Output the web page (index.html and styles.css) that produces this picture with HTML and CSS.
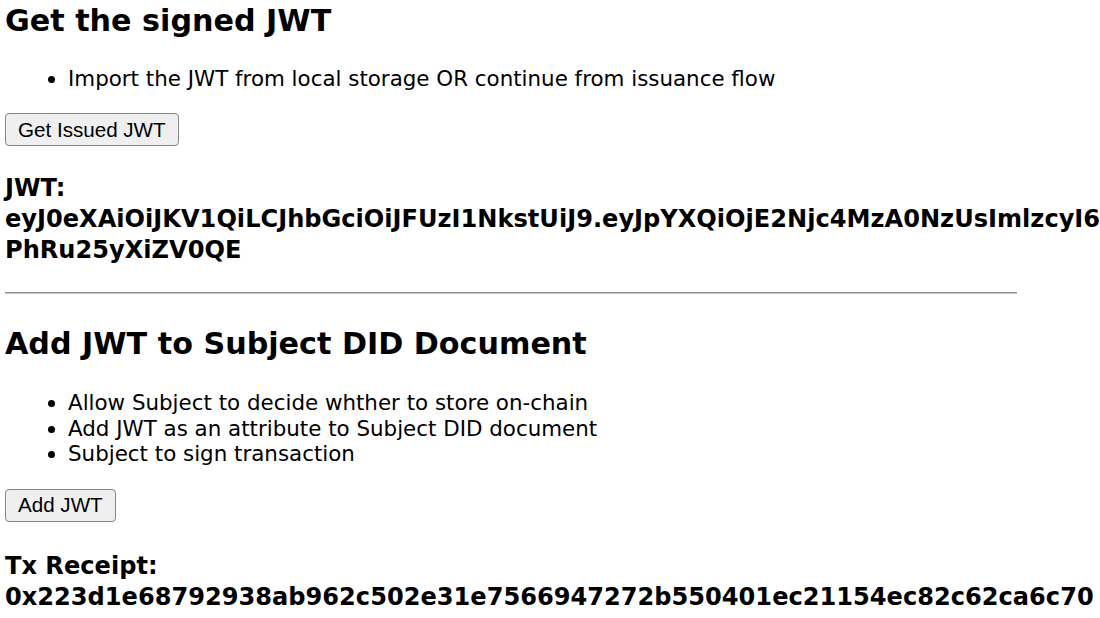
FILE: index.html
```html
<!DOCTYPE html>
<html lang="en">
<head>
<meta charset="utf-8">
<title>JWT</title>
<link rel="stylesheet" href="styles.css">
</head>
<body>
<main class="page">
  <section class="step">
    <h2 class="step-title">Get the signed JWT</h2>
    <ul class="notes">
      <li>Import the JWT from local storage OR continue from issuance flow</li>
    </ul>
    <button class="action" type="button">Get Issued JWT</button>
    <h3 class="result"><span class="result-label">JWT:</span><span class="result-value">eyJ0eXAiOiJKV1QiLCJhbGciOiJFUzI1NkstUiJ9.eyJpYXQiOjE2Njc4MzA0NzUsImlzcyI6ImRpZDpldGhyOnJpbmtlYnk6MHgzZjE0YjJhNjc4ZDlkMmE0YzE2ZTgxMDI2NzE3NDg5ZjU1ZjcxYzRmIn0.Qm5rVDNFdUh0cU9sZ1R4aGpYbW9YcUZ4d2l0dFZ5Z0lhR3ZzYUJ3c2Fx-PhRu25yXiZV0QE</span></h3>
  </section>
  <hr class="divider">
  <section class="step step--after-divider">
    <h2 class="step-title">Add JWT to Subject DID Document</h2>
    <ul class="notes">
      <li>Allow Subject to decide whther to store on-chain</li>
      <li>Add JWT as an attribute to Subject DID document</li>
      <li>Subject to sign transaction</li>
    </ul>
    <button class="action" type="button">Add JWT</button>
    <h3 class="result"><span class="result-label">Tx Receipt:</span><span class="result-value">0x223d1e68792938ab962c502e31e7566947272b550401ec21154ec82c62ca6c70</span></h3>
  </section>
</main>
</body>
</html>
```
FILE: styles.css
```css
html {
  overflow: hidden;
  background: #fff;
}

body {
  margin: 0;
  font-family: "DejaVu Sans", Verdana, sans-serif;
  color: #000;
}

.page {
  width: 1012px;
  padding: 3px 0 0 5px;
}

.step-title {
  margin: 0;
  font-size: 30.2px;
  line-height: 36px;
  font-weight: bold;
}

.notes {
  margin: 26.6px 0 0;
  padding-left: 63px;
  font-size: 21.4px;
  line-height: 25.7px;
}

.action {
  display: block;
  margin: 22px 0 0;
  height: 33px;
  padding: 0 12px;
  font-family: "Liberation Sans", Arial, sans-serif;
  font-size: 20.6px;
  color: #000;
  background: #efefef;
  border: 1px solid #858585;
  border-radius: 4px;
}

.result {
  margin: 27px 0 0;
  font-size: 24.1px;
  line-height: 31px;
  font-weight: bold;
}

.result-label,
.result-value {
  display: block;
}

.divider {
  margin: 26px 0 0;
  height: 0;
  border: 0;
  border-top: 1px solid #8f8f8f;
  border-bottom: 1px solid #c4c4c4;
}

.step--after-divider .step-title {
  margin-top: 31.4px;
}

.step--after-divider .notes {
  margin-top: 28.4px;
}

.step--after-divider .action {
  margin-top: 21.5px;
}

.step--after-divider .result {
  margin-top: 29.5px;
}
```
